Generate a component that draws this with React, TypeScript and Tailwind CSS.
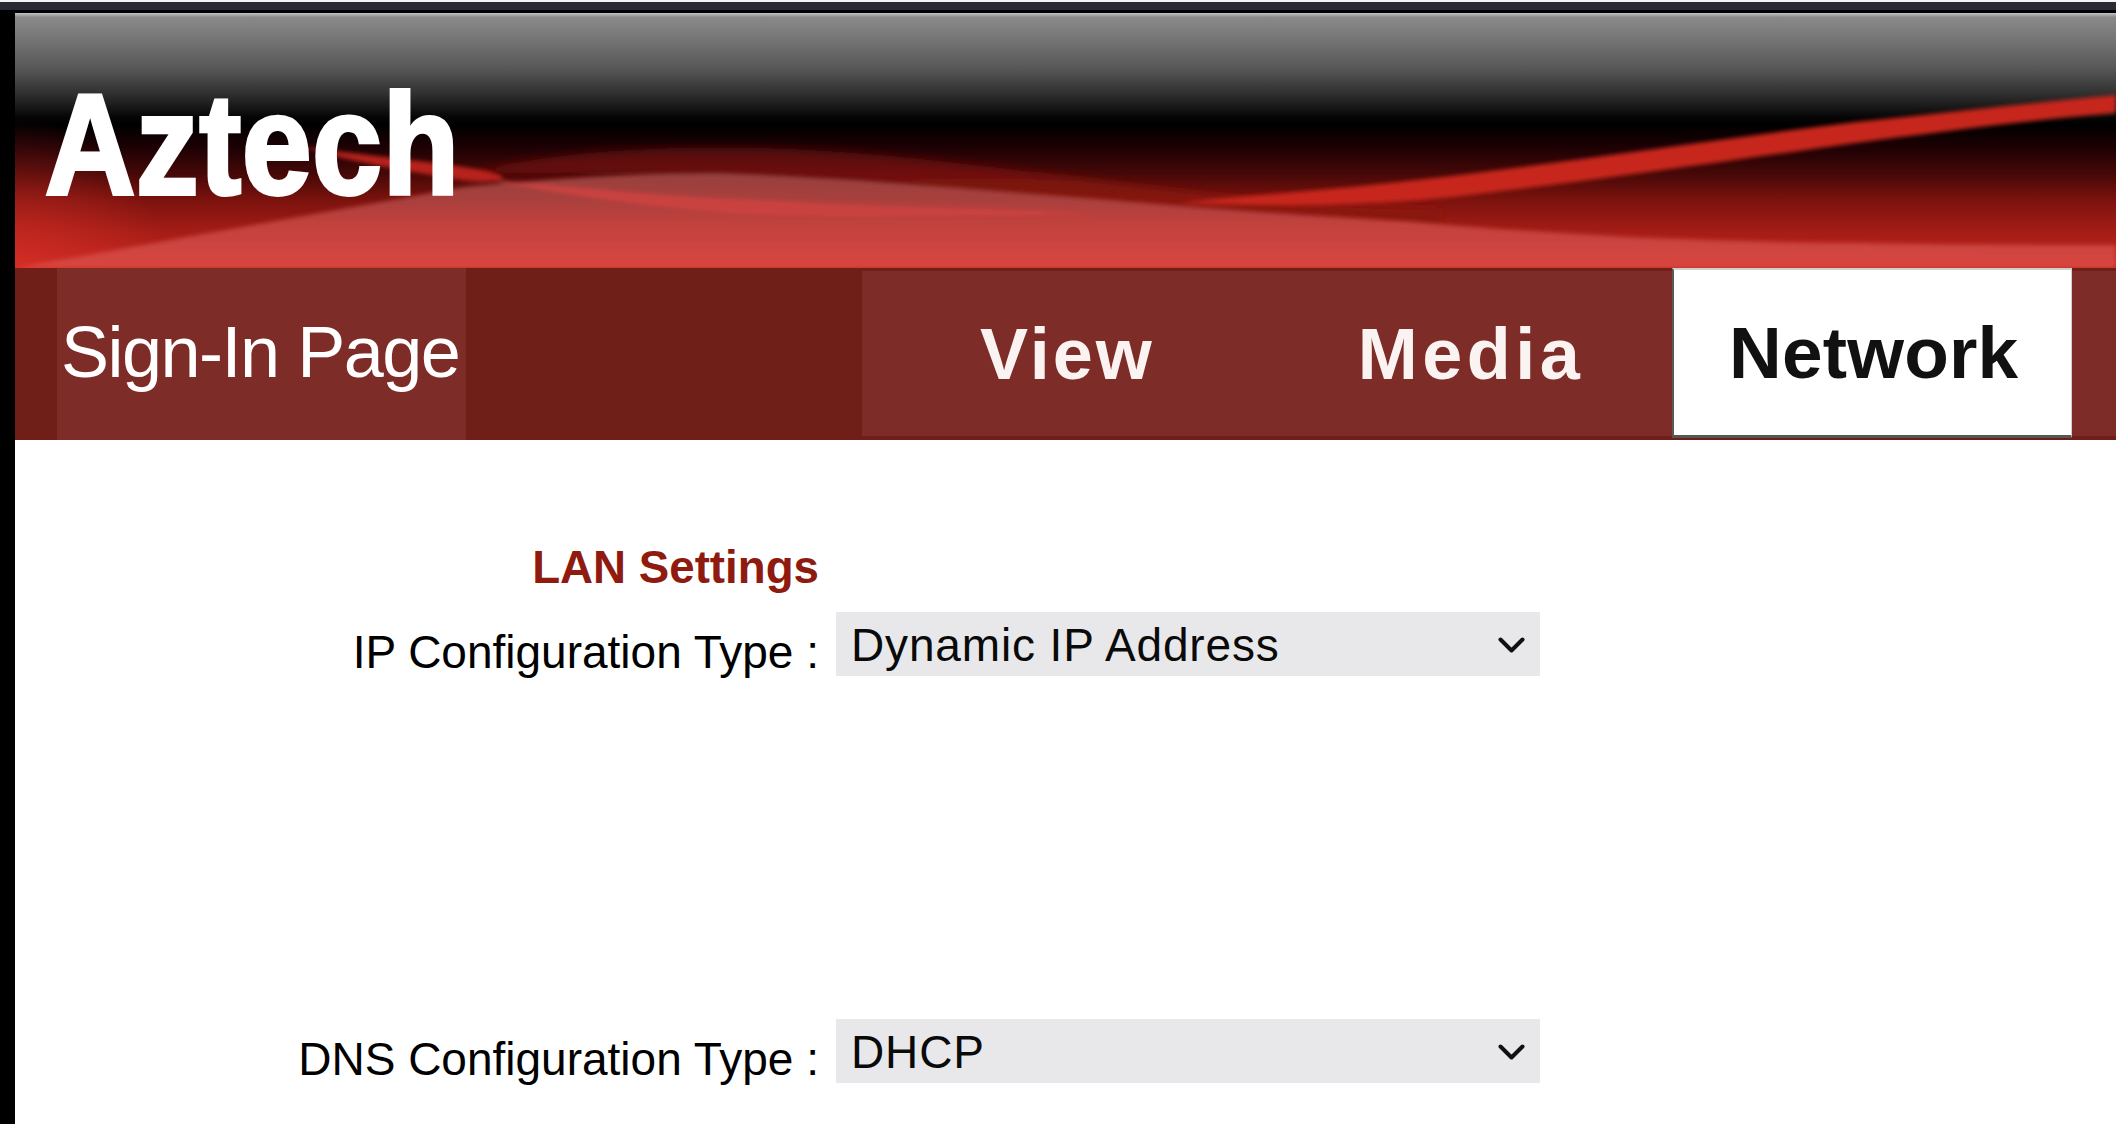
import React from 'react';

const BannerArt: React.FC = () => (
  <svg className="absolute inset-0 h-full w-full" viewBox="15 13 2101 255" preserveAspectRatio="none">
    <defs>
      <linearGradient id="sky" x1="0" y1="13" x2="0" y2="268" gradientUnits="userSpaceOnUse">
        <stop offset="0" stopColor="#c4c4c4" />
        <stop offset="0.016" stopColor="#8a8a8a" />
        <stop offset="0.1" stopColor="#767676" />
        <stop offset="0.22" stopColor="#565656" />
        <stop offset="0.32" stopColor="#2e2e2e" />
        <stop offset="0.41" stopColor="#050505" />
        <stop offset="0.44" stopColor="#000000" />
        <stop offset="0.53" stopColor="#1e0104" />
        <stop offset="0.63" stopColor="#450807" />
        <stop offset="0.74" stopColor="#7e130e" />
        <stop offset="0.86" stopColor="#a51d16" />
        <stop offset="1" stopColor="#c4261f" />
      </linearGradient>
      <linearGradient id="wave" x1="0" y1="170" x2="0" y2="268" gradientUnits="userSpaceOnUse">
        <stop offset="0" stopColor="#94403c" />
        <stop offset="0.3" stopColor="#a8403c" />
        <stop offset="0.55" stopColor="#c2423e" />
        <stop offset="1" stopColor="#d94641" />
      </linearGradient>
      <linearGradient id="darkwave" x1="0" y1="143" x2="0" y2="205" gradientUnits="userSpaceOnUse">
        <stop offset="0" stopColor="#4a0a08" />
        <stop offset="0.6" stopColor="#77120d" />
        <stop offset="1" stopColor="#8a1610" />
      </linearGradient>
      <radialGradient id="corner" cx="15" cy="268" r="150" gradientUnits="userSpaceOnUse">
        <stop offset="0" stopColor="#e0332b" stopOpacity="0.55" />
        <stop offset="1" stopColor="#e0332b" stopOpacity="0" />
      </radialGradient>
      <filter id="soft"><feGaussianBlur stdDeviation="2" /></filter>
      <filter id="softer"><feGaussianBlur stdDeviation="4" /></filter>
    </defs>
    <rect x="15" y="13" width="2101" height="255" fill="url(#sky)" />
    <rect x="15" y="118" width="150" height="150" fill="url(#corner)" />
    <path d="M470 172 C 560 152 640 146 760 148 C 900 152 1020 172 1160 188 C 1260 200 1340 206 1440 208 L 1440 226 L 1100 205 L 860 182 L 700 175 Z" fill="url(#darkwave)" filter="url(#softer)" />
    <g filter="url(#soft)">
      <path d="M15 268 L 464 187 C 560 178 640 172 720 173 C 860 178 980 190 1110 200 C 1220 210 1320 216 1416 222 C 1500 230 1560 233 1628 237 C 1720 241 1800 243 1856 243 C 1950 245 2040 245 2116 245 L 2116 268 Z" fill="url(#wave)" />
      <path d="M490 180 C 570 186 650 196 760 200 C 880 208 990 207 1100 214 C 980 216 860 218 740 214 C 640 206 570 196 490 180 Z" fill="#c9423f" />
      <path d="M1180 203 C 1260 194 1330 190 1400 182 C 1560 164 1710 140 1856 122 C 1950 112 2040 102 2116 95 L 2116 113 C 2030 120 1940 132 1856 143 C 1720 162 1600 180 1470 195 C 1400 204 1300 208 1180 203 Z" fill="#c7261e" />
      <path d="M300 146 C 350 154 420 160 470 168 C 482 170 498 172 504 178 C 492 184 470 182 450 178 C 400 170 350 162 300 146 Z" fill="#b8231b" />
    </g>
  </svg>
);

const Field: React.FC<{ label: string; value: string; drop: string }> = ({ label, value, drop }) => (
  <div className={`flex items-start gap-[17px] ${drop}`}>
    <div className="w-[804px] pt-[17px] text-right text-[46px] leading-[46px] text-black">{label}</div>
    <div className="flex h-[64px] w-[704px] items-center justify-between bg-[#e8e8ea] pt-[2px] pl-[15px] pr-[15px] text-[46px] leading-[50px] tracking-[0.85px] text-[#0a0a0a]">
      <span>{value}</span>
      <svg width="27" height="17" viewBox="0 0 27 17" fill="none">
        <path d="M2.5 2.5 L13.5 13.5 L24.5 2.5" stroke="#111111" strokeWidth="4" strokeLinecap="round" strokeLinejoin="round" />
      </svg>
    </div>
  </div>
);

export default function App() {
  return (
    <div className="flex h-[1124px] flex-col overflow-hidden bg-white font-['Liberation_Sans',Arial,sans-serif]">
      {/* window strip */}
      <div className="h-[2px] bg-[#f4f4f4]" />
      <div className="h-[8px] bg-[#2a2a35]" />
      <div className="h-[3px] bg-black" />

      <div className="flex flex-1">
        <div className="w-[15px] bg-black" />

        <div className="flex flex-1 flex-col">
          {/* Banner */}
          <div className="relative h-[255px] overflow-hidden">
            <BannerArt />
            <div className="absolute left-[30px] top-[61px] origin-left scale-x-[0.88] text-[142px] font-bold leading-[142px] tracking-[1px] text-white blur-[0.6px] [-webkit-text-stroke:4px_white]">
              Aztech
            </div>
          </div>

          {/* Nav */}
          <nav className="flex h-[172px] bg-[#6f1f18]">
            <div className="ml-[42px] flex w-[409px] items-center bg-[#7e2c27] pb-[4px] pl-[4px] text-[72px] tracking-[-1.5px] text-white blur-[0.5px]">
              Sign-In Page
            </div>
            <div className="ml-[396px] mt-[3px] mb-[4px] flex flex-1">
              <div className="flex w-[810px] items-center gap-[203px] bg-[#7e2c27] pl-[118px] text-[72px] font-bold text-[#fbf3f1]">
                <span className="tracking-[3px] blur-[0.5px]">View</span>
                <span className="tracking-[4.5px] blur-[0.5px]">Media</span>
              </div>
              <div className="-mt-[3px] -mb-[2px] flex w-[400px] items-center border-t-2 border-r border-b-[3px] border-l-2 border-t-[#cfcfcf] border-r-[#cfcfcf] border-b-[#555555] border-l-[#5a5a55] bg-white pl-[55px] text-[73px] font-bold tracking-[0.2px] text-[#111111]">
                <span className="blur-[0.5px]">Network</span>
              </div>
              <div className="flex-1 bg-[#7e2c27]" />
            </div>
          </nav>

          {/* Form */}
          <div className="flex flex-col pt-[102px]">
            <div className="w-[804px] text-right text-[45.7px] font-bold leading-[52px] text-[#8f1a10]">LAN Settings</div>
            <Field label="IP Configuration Type :" value="Dynamic IP Address" drop="mt-[18px]" />
            <Field label="DNS Configuration Type :" value="DHCP" drop="mt-[343px]" />
          </div>
        </div>
      </div>
    </div>
  );
}
